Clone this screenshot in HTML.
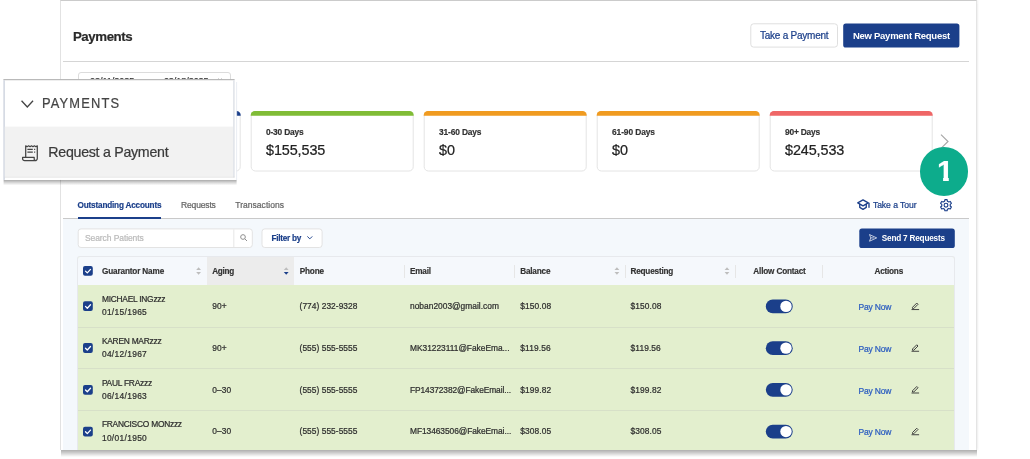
<!DOCTYPE html>
<html lang="en">
<head>
<meta charset="utf-8">
<title>Payments</title>
<style>
*{box-sizing:border-box;margin:0;padding:0}
html,body{width:1030px;height:459px;overflow:hidden;background:#fff}
body{position:relative;font-family:"Liberation Sans",sans-serif;color:#333}
#app{position:absolute;left:0;top:0;width:1030px;height:459px;overflow:hidden;will-change:transform}
.a{position:absolute}
.t{position:absolute;white-space:nowrap;-webkit-text-stroke:.22px}
#panel{left:60px;top:0;width:917px;height:450px;background:#fff;border:1px solid #e2e2e2;border-top-color:#cbcbcb;border-right-color:#e4e4e4;border-bottom:0;box-shadow:1.500px 0 1.500px rgba(0,0,0,.05)}
#pshadow{left:60.500px;top:450px;width:916.300px;height:6.500px;background:linear-gradient(rgba(0,0,0,.31),rgba(0,0,0,.21) 35%,rgba(0,0,0,.08) 75%,rgba(0,0,0,0))}
#hline{left:63px;top:61px;width:906.300px;height:1px;background:#d5d5d5}
#lightbg{left:63px;top:219px;width:906px;height:231px;background:#f4f8fc}
#tabline{left:63px;top:218px;width:906.300px;height:1px;background:#c9c9c9}
#tabact{left:77.7px;top:217px;width:83.4px;height:2px;background:#1b3f8a}
#date{left:78px;top:72px;width:153px;height:22px;border:1px solid #dcdcdc;border-radius:3px;background:#fff}
#table{left:77px;top:256px;width:878.300px;height:194px;background:#e3efce;border:1px solid #e7e9ed;border-bottom:0;border-radius:3px 3px 0 0;overflow:hidden}
#thead{left:0;top:0;width:100%;height:28.200px;background:#f5f8fc}
#aginghl{left:129.200px;top:0;width:87px;height:28.200px;background:#ececec}
.sep{top:8px;width:1px;height:12.500px;background:#e6e6e6}
.rl{left:0;width:100%;height:1px;background:#d7e0c8}
#circle{left:919.7px;top:147.1px;width:48.5px;height:48.5px;border-radius:50%;background:#0dac8c}
svg{position:absolute;overflow:visible}
</style>
</head>
<body>
<div id="app">
<div id="pshadow" class="a"></div>
<div id="panel" class="a"></div>
<div id="hline" class="a"></div>
<svg id="btns" style="left:740px;top:15px" width="230" height="40" viewBox="740 15 230 40"><rect x="750.800" y="23.800" width="86.700" height="23.300" rx="2.800" fill="#fff" stroke="#dfdfdf"/><rect x="843.200" y="23.500" width="116.200" height="24" rx="2.600" fill="#1b3f8a"/></svg>
<div id="date" class="a"></div>
<svg style="left:215.500px;top:77.600px" width="8" height="8" viewBox="0 0 16 16" fill="none" stroke="#999" stroke-width="1.6"><rect x="1.5" y="3" width="13" height="11.5" rx="1.5"/><path d="M1.5 7h13M5 1v4M11 1v4"/></svg>
<svg id="cards" style="left:0;top:0" width="1030" height="200" viewBox="0 0 1030 200">
<rect x="78.2" y="111.5" width="162" height="59.5" rx="4.2" fill="#fff" stroke="#e4e4e4"/>
<path d="M77.7 115.7v-0.5a4.2 4.2 0 0 1 4.2-4.2h154.6a4.2 4.2 0 0 1 4.2 4.2v0.5z" fill="#1b3f8a"/>
<rect x="251.2" y="111.5" width="162" height="59.5" rx="4.2" fill="#fff" stroke="#e4e4e4"/>
<path d="M250.7 115.7v-0.5a4.2 4.2 0 0 1 4.2-4.2h154.6a4.2 4.2 0 0 1 4.2 4.2v0.5z" fill="#80bc36"/>
<rect x="424.2" y="111.5" width="162" height="59.5" rx="4.2" fill="#fff" stroke="#e4e4e4"/>
<path d="M423.7 115.7v-0.5a4.2 4.2 0 0 1 4.2-4.2h154.6a4.2 4.2 0 0 1 4.2 4.2v0.5z" fill="#f09b20"/>
<rect x="597.2" y="111.5" width="162" height="59.5" rx="4.2" fill="#fff" stroke="#e4e4e4"/>
<path d="M596.7 115.7v-0.5a4.2 4.2 0 0 1 4.2-4.2h154.6a4.2 4.2 0 0 1 4.2 4.2v0.5z" fill="#f09b20"/>
<rect x="770.2" y="111.5" width="162" height="59.5" rx="4.2" fill="#fff" stroke="#e4e4e4"/>
<path d="M769.7 115.7v-0.5a4.2 4.2 0 0 1 4.2-4.2h154.6a4.2 4.2 0 0 1 4.2 4.2v0.5z" fill="#ef6666"/>
</svg>
<svg style="left:940px;top:134px" width="9" height="15" viewBox="0 0 9 15" fill="none" stroke="#a6a6a6" stroke-width="1.150"><path d="M1 0.7l7 6.8l-7 6.8"/></svg>
<div id="lightbg" class="a"></div>
<div id="tabline" class="a"></div>
<div id="tabact" class="a"></div>
<!-- take a tour icon -->
<svg style="left:857.400px;top:198.800px" width="13.300" height="11.200" viewBox="0 0 26.600 22" fill="none" stroke="#1b3f8a" stroke-width="2.700" stroke-linejoin="round" stroke-linecap="round"><path d="M1.500 7.500L12 1.500l10.500 6L12 13.500z"/><path d="M5.500 10.500v6.200l6.500 3.800l6.500-3.800v-6.200"/><path d="M24 8v8.500"/></svg>
<!-- gear -->
<svg style="left:939.700px;top:198.800px" width="12" height="12.400" viewBox="0 0 12 12.400" fill="none" stroke="#1b3f8a" stroke-width="1.150" stroke-linejoin="round"><path d="M7.40 2.13L7.09 0.60L4.91 0.60L4.60 2.13L3.18 2.95L1.70 2.46L0.61 4.34L1.78 5.38L1.78 7.02L0.61 8.06L1.70 9.94L3.18 9.45L4.60 10.27L4.91 11.80L7.09 11.80L7.40 10.27L8.82 9.45L10.30 9.94L11.39 8.06L10.22 7.02L10.22 5.38L11.39 4.34L10.30 2.46L8.82 2.95Z"/><circle cx="6" cy="6.200" r="1.900"/></svg>
<svg id="ctl" style="left:70px;top:222px" width="900" height="32" viewBox="70 222 900 32"><rect x="78.200" y="228.900" width="174.100" height="18.600" rx="2.800" fill="#fff" stroke="#e3e3e3"/><rect x="233.400" y="229.400" width=".900" height="17.600" fill="#e3e3e3"/><rect x="262" y="228.900" width="60.100" height="18.600" rx="2.800" fill="#fff" stroke="#e3e3e3"/><rect x="859.300" y="228.600" width="95.500" height="19.400" rx="2.600" fill="#1b3f8a"/></svg>
<svg style="left:239.500px;top:234.300px" width="7.500" height="7.500" viewBox="0 0 15 15" fill="none" stroke="#8f8f8f" stroke-width="2"><circle cx="6" cy="6" r="4.700"/><path d="M9.500 9.500l4.500 4.500"/></svg>
<svg style="left:306.800px;top:236.300px" width="5.600" height="3.600" viewBox="0 0 11 7" fill="none" stroke="#1b3f8a" stroke-width="1.900"><path d="M.7.800l4.800 4.800l4.800-4.800"/></svg>
<svg style="left:868.700px;top:234.300px" width="8.200" height="7.800" viewBox="0 0 16 15" fill="none" stroke="#fff" stroke-width="1.400" stroke-linejoin="round"><path d="M1 1l14 6.500l-14 6.500l2.500-6.500z"/><path d="M3.500 7.500h6"/></svg>
<div id="table" class="a">
<div id="thead" class="a"></div>
<div id="aginghl" class="a"></div>
<div class="a sep" style="left:326.100px"></div>
<div class="a sep" style="left:436.400px"></div>
<div class="a sep" style="left:546.700px"></div>
<div class="a sep" style="left:656.900px"></div>
<div class="a sep" style="left:744.200px"></div>
<div class="a rl" style="top:70px"></div>
<div class="a rl" style="top:111px"></div>
<div class="a rl" style="top:153px"></div>
</div>
<svg id="widgets" style="left:0;top:0" width="1030" height="459" viewBox="0 0 1030 459">
<rect x="83" y="266.0" width="9.800" height="9.800" rx="2" fill="#1b3f8a"/><path d="M85.500 271.1l1.800 1.800l3.200-3.500" fill="none" stroke="#fff" stroke-width="1.300" stroke-linecap="round" stroke-linejoin="round"/>
<path d="M198.6 267.3l2.400 2.700h-4.800z" fill="#bdbdbd"/><path d="M198.6 274.7l2.400-2.700h-4.800z" fill="#bdbdbd"/>
<path d="M286.2 267.3l2.400 2.700h-4.800z" fill="#bdbdbd"/><path d="M286.2 274.7l2.400-2.700h-4.800z" fill="#1b3f8a"/>
<path d="M616.9 267.3l2.400 2.700h-4.800z" fill="#bdbdbd"/><path d="M616.9 274.7l2.400-2.700h-4.800z" fill="#bdbdbd"/>
<path d="M727.0 267.3l2.400 2.700h-4.800z" fill="#bdbdbd"/><path d="M727.0 274.7l2.400-2.700h-4.800z" fill="#bdbdbd"/>
<rect x="83" y="301.3" width="9.800" height="9.800" rx="2" fill="#1b3f8a"/><path d="M85.500 306.4l1.800 1.800l3.200-3.500" fill="none" stroke="#fff" stroke-width="1.300" stroke-linecap="round" stroke-linejoin="round"/>
<rect x="765.800" y="299.45" width="26.900" height="13.900" rx="6.950" fill="#1b3f8a"/><circle cx="786" cy="306.40" r="5.700" fill="#fff"/>
<g fill="none" stroke="#3a3a3a" stroke-width=".950" stroke-linejoin="round" transform="translate(911 301.55)"><path d="M1.500 5.750l4.250-4.250l1.250 1.250l-4.250 4.250h-1.250z"/><path d="M.500 8h7.600"/></g>
<rect x="83" y="343.1" width="9.800" height="9.800" rx="2" fill="#1b3f8a"/><path d="M85.500 348.2l1.800 1.800l3.200-3.500" fill="none" stroke="#fff" stroke-width="1.300" stroke-linecap="round" stroke-linejoin="round"/>
<rect x="765.800" y="341.18" width="26.900" height="13.900" rx="6.950" fill="#1b3f8a"/><circle cx="786" cy="348.13" r="5.700" fill="#fff"/>
<g fill="none" stroke="#3a3a3a" stroke-width=".950" stroke-linejoin="round" transform="translate(911 343.28)"><path d="M1.500 5.750l4.250-4.250l1.250 1.250l-4.250 4.250h-1.250z"/><path d="M.500 8h7.600"/></g>
<rect x="83" y="384.9" width="9.800" height="9.800" rx="2" fill="#1b3f8a"/><path d="M85.500 390.0l1.800 1.800l3.200-3.500" fill="none" stroke="#fff" stroke-width="1.300" stroke-linecap="round" stroke-linejoin="round"/>
<rect x="765.800" y="382.91" width="26.900" height="13.900" rx="6.950" fill="#1b3f8a"/><circle cx="786" cy="389.86" r="5.700" fill="#fff"/>
<g fill="none" stroke="#3a3a3a" stroke-width=".950" stroke-linejoin="round" transform="translate(911 385.01)"><path d="M1.500 5.750l4.250-4.250l1.250 1.250l-4.250 4.250h-1.250z"/><path d="M.500 8h7.600"/></g>
<rect x="83" y="426.7" width="9.800" height="9.800" rx="2" fill="#1b3f8a"/><path d="M85.500 431.8l1.800 1.800l3.200-3.500" fill="none" stroke="#fff" stroke-width="1.300" stroke-linecap="round" stroke-linejoin="round"/>
<rect x="765.800" y="424.64" width="26.900" height="13.900" rx="6.950" fill="#1b3f8a"/><circle cx="786" cy="431.59" r="5.700" fill="#fff"/>
<g fill="none" stroke="#3a3a3a" stroke-width=".950" stroke-linejoin="round" transform="translate(911 426.74)"><path d="M1.500 5.750l4.250-4.250l1.250 1.250l-4.250 4.250h-1.250z"/><path d="M.500 8h7.600"/></g>
</svg>
<span class="t" style="left:72.9px;top:27px;font-size:13.3px;line-height:19px;color:#2a2a2a;font-weight:700;-webkit-text-stroke:.18px;letter-spacing:-0.43px;">Payments</span>
<span class="t" style="left:760.0px;top:29px;font-size:10px;line-height:14px;color:#1b3f8a;letter-spacing:-0.24px;">Take a Payment</span>
<span class="t" style="left:852.9px;top:29px;font-size:9.5px;line-height:14px;color:#fff;font-weight:700;-webkit-text-stroke:.18px;letter-spacing:-0.26px;-webkit-text-stroke:0;">New Payment Request</span>
<span class="t" style="left:90.0px;top:75px;font-size:9px;line-height:13px;color:#333;">02/11/2025</span>
<span class="t" style="left:163.9px;top:75px;font-size:9px;line-height:13px;color:#333;letter-spacing:-0.04px;">02/18/2025</span>
<span class="t" style="left:266.0px;top:126px;font-size:8.4px;line-height:12px;color:#333;font-weight:700;-webkit-text-stroke:.18px;letter-spacing:-0.19px;">0-30 Days</span>
<span class="t" style="left:266.0px;top:140px;font-size:14.4px;line-height:21px;color:#222;letter-spacing:-0.10px;">$155,535</span>
<span class="t" style="left:439.0px;top:126px;font-size:8.4px;line-height:12px;color:#333;font-weight:700;-webkit-text-stroke:.18px;letter-spacing:-0.14px;">31-60 Days</span>
<span class="t" style="left:439.0px;top:140px;font-size:14.4px;line-height:21px;color:#222;letter-spacing:-0.10px;">$0</span>
<span class="t" style="left:612.0px;top:126px;font-size:8.4px;line-height:12px;color:#333;font-weight:700;-webkit-text-stroke:.18px;letter-spacing:-0.09px;">61-90 Days</span>
<span class="t" style="left:612.0px;top:140px;font-size:14.4px;line-height:21px;color:#222;letter-spacing:-0.10px;">$0</span>
<span class="t" style="left:785.0px;top:126px;font-size:8.4px;line-height:12px;color:#333;font-weight:700;-webkit-text-stroke:.18px;letter-spacing:-0.21px;">90+ Days</span>
<span class="t" style="left:785.0px;top:140px;font-size:14.4px;line-height:21px;color:#222;letter-spacing:-0.10px;">$245,533</span>
<span class="t" style="left:77.6px;top:200px;font-size:8.2px;line-height:12px;color:#1b3f8a;font-weight:700;-webkit-text-stroke:.18px;letter-spacing:-0.19px;">Outstanding Accounts</span>
<span class="t" style="left:181.0px;top:199px;font-size:8.5px;line-height:12px;color:#666;letter-spacing:-0.15px;">Requests</span>
<span class="t" style="left:235.3px;top:199px;font-size:8.5px;line-height:12px;color:#666;letter-spacing:0.03px;">Transactions</span>
<span class="t" style="left:872.9px;top:199px;font-size:8.6px;line-height:13px;color:#1b3f8a;letter-spacing:-0.05px;">Take a Tour</span>
<span class="t" style="left:85.0px;top:232px;font-size:8.5px;line-height:12px;color:#bbb;letter-spacing:-0.09px;">Search Patients</span>
<span class="t" style="left:271.5px;top:233px;font-size:8.2px;line-height:12px;color:#1b3f8a;font-weight:700;-webkit-text-stroke:.18px;letter-spacing:-0.25px;">Filter by</span>
<span class="t" style="left:881.8px;top:233px;font-size:8.2px;line-height:12px;color:#fff;font-weight:700;-webkit-text-stroke:.18px;letter-spacing:-0.20px;-webkit-text-stroke:0;">Send 7 Requests</span>
<span class="t" style="left:102.0px;top:266px;font-size:8.2px;line-height:12px;color:#333;font-weight:700;-webkit-text-stroke:.18px;letter-spacing:-0.15px;">Guarantor Name</span>
<span class="t" style="left:212.2px;top:266px;font-size:8.2px;line-height:12px;color:#333;font-weight:700;-webkit-text-stroke:.18px;letter-spacing:-0.28px;">Aging</span>
<span class="t" style="left:299.7px;top:266px;font-size:8.2px;line-height:12px;color:#333;font-weight:700;-webkit-text-stroke:.18px;letter-spacing:-0.15px;">Phone</span>
<span class="t" style="left:410.1px;top:266px;font-size:8.2px;line-height:12px;color:#333;font-weight:700;-webkit-text-stroke:.18px;letter-spacing:-0.23px;">Email</span>
<span class="t" style="left:520.2px;top:266px;font-size:8.2px;line-height:12px;color:#333;font-weight:700;-webkit-text-stroke:.18px;letter-spacing:-0.19px;">Balance</span>
<span class="t" style="left:630.5px;top:266px;font-size:8.2px;line-height:12px;color:#333;font-weight:700;-webkit-text-stroke:.18px;letter-spacing:-0.20px;">Requesting</span>
<span class="t" style="left:753.3px;top:266px;font-size:8.2px;line-height:12px;color:#333;font-weight:700;-webkit-text-stroke:.18px;letter-spacing:-0.17px;">Allow Contact</span>
<span class="t" style="left:874.5px;top:266px;font-size:8.2px;line-height:12px;color:#333;font-weight:700;-webkit-text-stroke:.18px;letter-spacing:-0.22px;">Actions</span>
<span class="t" style="left:101.9px;top:293px;font-size:8.4px;line-height:12px;color:#2e2e2e;letter-spacing:-0.24px;">MICHAEL INGzzz</span>
<span class="t" style="left:101.9px;top:306px;font-size:8.4px;line-height:12px;color:#2e2e2e;letter-spacing:0.33px;">01/15/1965</span>
<span class="t" style="left:212.2px;top:300px;font-size:8.4px;line-height:12px;color:#2e2e2e;letter-spacing:0.10px;">90+</span>
<span class="t" style="left:299.6px;top:300px;font-size:8.4px;line-height:12px;color:#2e2e2e;letter-spacing:0.04px;">(774) 232-9328</span>
<span class="t" style="left:410.0px;top:300px;font-size:8.4px;line-height:12px;color:#2e2e2e;letter-spacing:0.02px;">noban2003@gmail.com</span>
<span class="t" style="left:520.3px;top:300px;font-size:8.4px;line-height:12px;color:#2e2e2e;letter-spacing:0.10px;">$150.08</span>
<span class="t" style="left:630.5px;top:300px;font-size:8.4px;line-height:12px;color:#2e2e2e;letter-spacing:0.10px;">$150.08</span>
<span class="t" style="left:858.4px;top:301px;font-size:8.5px;line-height:12px;color:#2b5cc0;letter-spacing:-0.17px;">Pay Now</span>
<span class="t" style="left:101.9px;top:335px;font-size:8.4px;line-height:12px;color:#2e2e2e;letter-spacing:-0.24px;">KAREN MARzzz</span>
<span class="t" style="left:101.9px;top:348px;font-size:8.4px;line-height:12px;color:#2e2e2e;letter-spacing:0.33px;">04/12/1967</span>
<span class="t" style="left:212.2px;top:342px;font-size:8.4px;line-height:12px;color:#2e2e2e;letter-spacing:0.10px;">90+</span>
<span class="t" style="left:299.6px;top:342px;font-size:8.4px;line-height:12px;color:#2e2e2e;letter-spacing:0.04px;">(555) 555-5555</span>
<span class="t" style="left:410.0px;top:342px;font-size:8.4px;line-height:12px;color:#2e2e2e;letter-spacing:-0.02px;">MK31223111@FakeEma...</span>
<span class="t" style="left:520.3px;top:342px;font-size:8.4px;line-height:12px;color:#2e2e2e;letter-spacing:0.10px;">$119.56</span>
<span class="t" style="left:630.5px;top:342px;font-size:8.4px;line-height:12px;color:#2e2e2e;letter-spacing:0.10px;">$119.56</span>
<span class="t" style="left:858.4px;top:343px;font-size:8.5px;line-height:12px;color:#2b5cc0;letter-spacing:-0.17px;">Pay Now</span>
<span class="t" style="left:101.9px;top:377px;font-size:8.4px;line-height:12px;color:#2e2e2e;letter-spacing:-0.24px;">PAUL FRAzzz</span>
<span class="t" style="left:101.9px;top:390px;font-size:8.4px;line-height:12px;color:#2e2e2e;letter-spacing:0.33px;">06/14/1963</span>
<span class="t" style="left:212.2px;top:384px;font-size:8.4px;line-height:12px;color:#2e2e2e;letter-spacing:0.10px;">0–30</span>
<span class="t" style="left:299.6px;top:384px;font-size:8.4px;line-height:12px;color:#2e2e2e;letter-spacing:0.04px;">(555) 555-5555</span>
<span class="t" style="left:410.0px;top:384px;font-size:8.4px;line-height:12px;color:#2e2e2e;letter-spacing:-0.09px;">FP14372382@FakeEmail...</span>
<span class="t" style="left:520.3px;top:384px;font-size:8.4px;line-height:12px;color:#2e2e2e;letter-spacing:0.10px;">$199.82</span>
<span class="t" style="left:630.5px;top:384px;font-size:8.4px;line-height:12px;color:#2e2e2e;letter-spacing:0.10px;">$199.82</span>
<span class="t" style="left:858.4px;top:385px;font-size:8.5px;line-height:12px;color:#2b5cc0;letter-spacing:-0.17px;">Pay Now</span>
<span class="t" style="left:101.9px;top:418px;font-size:8.4px;line-height:12px;color:#2e2e2e;letter-spacing:-0.24px;">FRANCISCO MONzzz</span>
<span class="t" style="left:101.9px;top:432px;font-size:8.4px;line-height:12px;color:#2e2e2e;letter-spacing:0.33px;">10/01/1950</span>
<span class="t" style="left:212.2px;top:425px;font-size:8.4px;line-height:12px;color:#2e2e2e;letter-spacing:0.10px;">0–30</span>
<span class="t" style="left:299.6px;top:425px;font-size:8.4px;line-height:12px;color:#2e2e2e;letter-spacing:0.04px;">(555) 555-5555</span>
<span class="t" style="left:410.0px;top:425px;font-size:8.4px;line-height:12px;color:#2e2e2e;letter-spacing:-0.06px;">MF13463506@FakeEmai...</span>
<span class="t" style="left:520.3px;top:425px;font-size:8.4px;line-height:12px;color:#2e2e2e;letter-spacing:0.10px;">$308.05</span>
<span class="t" style="left:630.5px;top:425px;font-size:8.4px;line-height:12px;color:#2e2e2e;letter-spacing:0.10px;">$308.05</span>
<span class="t" style="left:858.4px;top:426px;font-size:8.5px;line-height:12px;color:#2b5cc0;letter-spacing:-0.17px;">Pay Now</span>
<svg id="popup" style="left:0;top:0" width="260" height="200" viewBox="0 0 260 200">
<defs><linearGradient id="pg" x1="0" y1="0" x2="0" y2="1"><stop offset="0" stop-color="#000" stop-opacity=".34"/><stop offset=".45" stop-color="#000" stop-opacity=".17"/><stop offset="1" stop-color="#000" stop-opacity="0"/></linearGradient></defs>
<rect x="3.600" y="179.900" width="233" height="5.400" fill="url(#pg)"/>
<rect x="3.400" y="79.200" width="233.200" height="100.700" fill="#fff"/>
<rect x="236.300" y="82" width=".800" height="98" fill="#e4e8f0"/>
<rect x="3.400" y="79.200" width="231.200" height="1" fill="#a9a9a9"/>
<rect x="3.400" y="80.200" width="1.400" height="99.700" fill="#cdd3de"/>
<rect x="233.200" y="80.200" width="1.400" height="97.300" fill="#dde0e7"/>
<rect x="4.800" y="126.600" width="228.200" height="50.100" fill="#f2f2f2"/>
<rect x="4.800" y="176.700" width="229.800" height=".800" fill="#dedede"/>
</svg>
<svg style="left:21.400px;top:100.300px" width="12.600" height="8" viewBox="0 0 25 16" fill="none" stroke="#444" stroke-width="2.600"><path d="M1 1.500l11.500 12.500l11.500-12.500"/></svg>
<svg style="left:22px;top:144.700px" width="16" height="16.400" viewBox="0 0 16 16.400" fill="none" stroke="#444" stroke-width="1.250" stroke-linejoin="round"><path d="M3.700 12.300V.800l1.450.9l1.450-.9l1.450.9l1.450-.9l1.450.9l1.450-.9l1.450.9l1.450-.9V13.400a2.300 2.300 0 0 1-2.300 2.300"/><path d="M13 15.700H2.600A2 2 0 0 1 .600 13.700V12.300H12.200V13.700A2 2 0 0 0 13 15.700"/><path d="M5.400 4.400h5.400M12.100 4.400h1.100M5.400 7.200h5.400M12.100 7.200h1.100"/></svg>
<div id="circle" class="a"></div>
<span class="t" style="left:42.4px;top:93px;font-size:14px;line-height:20px;color:#444;letter-spacing:1.26px;transform:scaleX(.92);transform-origin:0 0;">PAYMENTS</span>
<span class="t" style="left:48.3px;top:142px;font-size:14.2px;line-height:20px;color:#3a3a3a;letter-spacing:-0.27px;">Request a Payment</span>
<span class="t" style="left:936.9px;top:150px;font-size:29.5px;line-height:42px;color:#fff;font-weight:700;-webkit-text-stroke:.18px;clip-path:polygon(0 0,100% 0,100% 27.600px,11.900px 27.600px,11.900px 100%,6.200px 100%,6.200px 27.600px,0 27.600px)">1</span>

</div>
</body>
</html>
